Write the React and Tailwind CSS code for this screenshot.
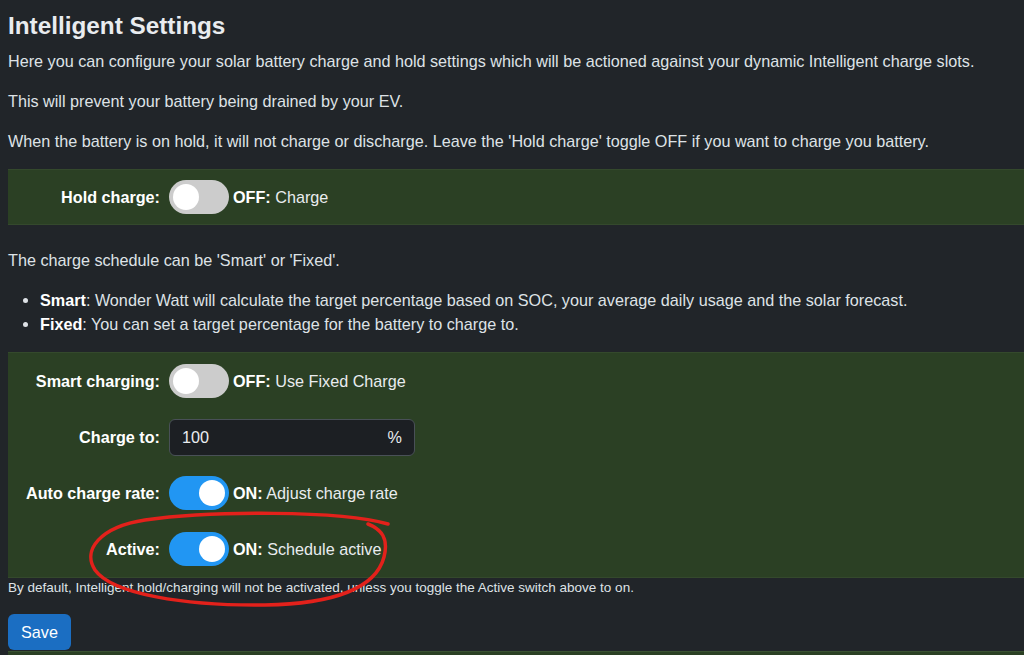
import React, { useState } from "react";

// w3schools-style slider toggle
const Toggle = ({ on, onChange }) => (
  <button
    type="button"
    onClick={onChange}
    className={`relative w-[60px] h-[34px] rounded-[34px] shrink-0 ${
      on ? "bg-[#2196f3]" : "bg-[#cccccc]"
    }`}
  >
    <span
      className={`absolute left-[4px] bottom-[4px] w-[26px] h-[26px] rounded-full bg-white transition-transform ${
        on ? "translate-x-[26px]" : ""
      }`}
    ></span>
  </button>
);

const Row = ({ label, children }) => (
  <div className="flex items-center h-[34px]">
    <div className="w-[161px] pr-[9px] text-right font-bold text-white whitespace-nowrap">
      {label}
    </div>
    {children}
  </div>
);

const Status = ({ on, text }) => (
  <span className="ml-[4px] text-[#e9ecef] whitespace-nowrap">
    <b className="font-bold text-white">{on ? "ON:" : "OFF:"}</b> {text}
  </span>
);

export default function App() {
  const [hold, setHold] = useState(false);
  const [smart, setSmart] = useState(false);
  const [autoRate, setAutoRate] = useState(true);
  const [active, setActive] = useState(true);

  return (
    <div
      className="relative min-h-[655px] overflow-hidden bg-[#212529] text-[#dee2e6] text-[16.2px] leading-[24px] pl-2 pt-[11px]"
      style={{ fontFamily: '"Liberation Sans", Arial, sans-serif' }}
    >
      <h3 className="text-[24.3px] leading-[29px] font-bold text-[#e9ecef] mb-[9px]">
        Intelligent Settings
      </h3>
      <p className="mb-4">
        Here you can configure your solar battery charge and hold settings which will be actioned against your dynamic Intelligent charge slots.
      </p>
      <p className="mb-4">This will prevent your battery being drained by your EV.</p>
      <p className="mb-4">
        When the battery is on hold, it will not charge or discharge. Leave the 'Hold charge' toggle OFF if you want to charge you battery.
      </p>

      {/* Hold charge panel */}
      <div className="mt-[3px] mb-[23px] bg-[#2b4024] border-y border-[#34492c] py-[10px]">
        <Row label="Hold charge:">
          <Toggle on={hold} onChange={() => setHold(!hold)} />
          <Status on={hold} text="Charge" />
        </Row>
      </div>

      <p className="mb-4">The charge schedule can be 'Smart' or 'Fixed'.</p>
      <ul className="list-disc pl-8 mb-4">
        <li>
          <b className="font-bold text-white">Smart</b>: Wonder Watt will calculate the target percentage based on SOC, your average daily usage and the solar forecast.
        </li>
        <li>
          <b className="font-bold text-white">Fixed</b>: You can set a target percentage for the battery to charge to.
        </li>
      </ul>

      {/* Schedule panel */}
      <div className="bg-[#2b4024] border-y border-[#34492c] py-[11px] flex flex-col gap-[22px]">
        <Row label="Smart charging:">
          <Toggle on={smart} onChange={() => setSmart(!smart)} />
          <Status on={smart} text="Use Fixed Charge" />
        </Row>
        <Row label="Charge to:">
          <div className="w-[246px] h-[37px] flex items-center justify-between px-3 bg-[#1c1f23] border border-[#495057] rounded-[6px] text-[#e9ecef]">
            <span>100</span>
            <span>%</span>
          </div>
        </Row>
        <Row label="Auto charge rate:">
          <Toggle on={autoRate} onChange={() => setAutoRate(!autoRate)} />
          <Status on={autoRate} text="Adjust charge rate" />
        </Row>
        <Row label="Active:">
          <Toggle on={active} onChange={() => setActive(!active)} />
          <Status on={active} text="Schedule active" />
        </Row>
      </div>

      <p className="text-[13.5px] leading-[20px] text-[#dee2e6]">
        By default, Intelligent hold/charging will not be activated, unless you toggle the Active switch above to on.
      </p>

      <button className="mt-[16px] h-[36px] px-[13px] rounded-[6px] bg-[#1b6ec2] text-white">
        Save
      </button>

      <div className="mt-[1px] h-[10px] bg-[#2b4024] border-t border-[#3a5232]"></div>

      {/* hand-drawn red circle around the Active row */}
      <svg
        className="absolute inset-0 pointer-events-none"
        width="1024"
        height="655"
        viewBox="0 0 1024 655"
      >
        <path
          d="M 388 524 C 340 510, 210 511, 145 520 C 100 527, 82 550, 95 570 C 112 594, 185 606, 265 605 C 334 604, 376 588, 384 557 C 389 538, 381 529, 368 524"
          fill="none"
          stroke="#e3211b"
          strokeWidth="3.5"
          strokeLinecap="round"
        />
      </svg>
    </div>
  );
}
